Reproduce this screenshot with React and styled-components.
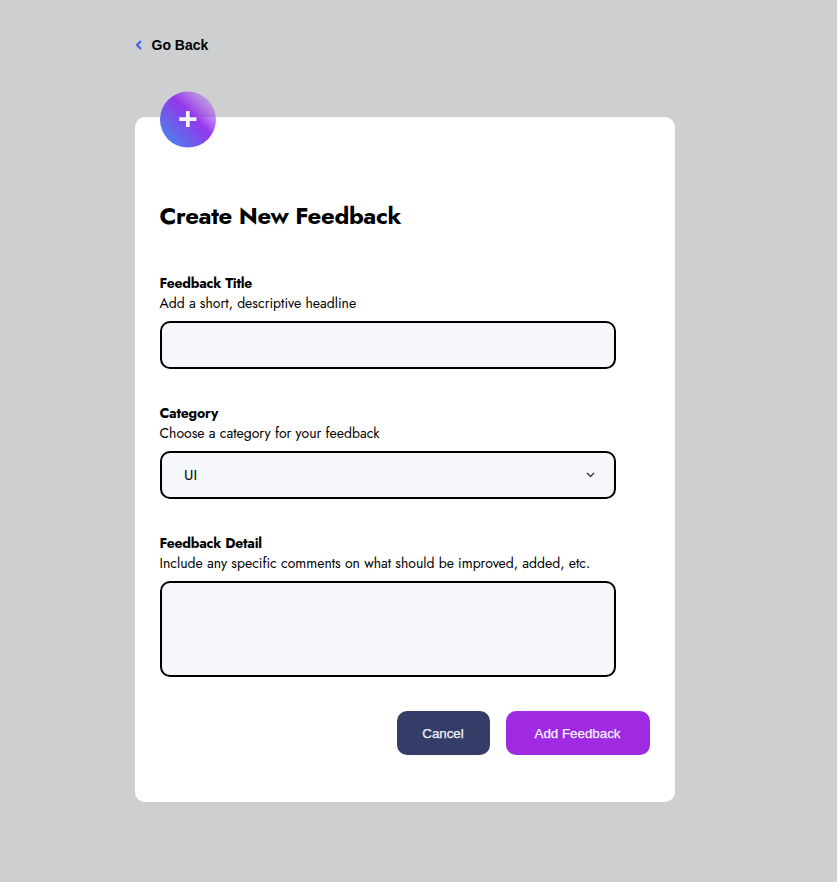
import React from "react";
import styled, { createGlobalStyle } from "styled-components";

const GlobalStyle = createGlobalStyle`
  *, *::before, *::after { box-sizing: border-box; }
  body { margin: 0; background: #cdcfd1; color: #000; font-family: Jost, Lato, sans-serif; }
`;

const Page = styled.main`
  width: 540px;
  min-height: 882px;
  margin-left: 134.5px;
  padding-top: 35px;
`;

const BackLink = styled.button`
  display: flex;
  align-items: center;
  gap: 10px;
  height: 20px;
  padding: 0 0 0 1px;
  border: 0;
  background: none;
  color: #000;
  font: bold 14px/20px "Liberation Sans", Arial, sans-serif;
  white-space: nowrap;
`;

const Card = styled.form`
  position: relative;
  display: flex;
  flex-direction: column;
  height: 685px;
  margin-top: 62px;
  padding: 80px 25px 47px;
  border-radius: 10px;
  background: #fff;
`;

const Badge = styled.svg`
  position: absolute;
  left: 25.5px;
  top: -25px;
  overflow: visible;
`;

const Title = styled.h1`
  margin: 0 0 39px;
  font-size: 24px;
  font-weight: 700;
  line-height: 37px;
  letter-spacing: -0.333px;
  white-space: nowrap;
`;

const Field = styled.div`
  display: flex;
  flex-direction: column;
  margin-bottom: 34px;
`;

const Label = styled.label`
  font-size: 14px;
  font-weight: 700;
  line-height: 20px;
  letter-spacing: -0.194px;
  width: max-content;
`;

const Hint = styled.span`
  margin-bottom: 8px;
  font-size: 14px;
  line-height: 20px;
  width: max-content;
`;

const Control = styled.div`
  display: flex;
  align-items: center;
  justify-content: space-between;
  width: 456px;
  height: ${(p) => p.$height}px;
  padding: 0 19px 0 22.5px;
  border: 2px solid #000;
  border-radius: 10px;
  background: #f5f7fd;
  font-size: 15px;
  line-height: 20px;
`;

const Actions = styled.div`
  display: flex;
  justify-content: flex-end;
  gap: 16px;
`;

const Button = styled.button`
  width: ${(p) => p.$width}px;
  height: 44px;
  padding: 0;
  border: 0;
  border-radius: 10px;
  background: ${(p) => p.$color};
  color: #f2f4fe;
  font: 13.333px "Liberation Sans", Arial, sans-serif;
  -webkit-text-stroke: 0.25px currentColor;
`;

export default function App() {
  return (
    <>
      <GlobalStyle />
      <Page>
        <BackLink type="button">
          <svg width="6" height="10" viewBox="0 0 6 10" fill="none">
            <path d="M5 1L1 5l4 4" stroke="#4661e6" strokeWidth="2" />
          </svg>
          Go Back
        </BackLink>
        <Card>
          <Badge width="56" height="56" viewBox="0 0.4 56 56">
            <defs>
              <linearGradient id="badge" x1="0" y1="56" x2="56" y2="0" gradientUnits="userSpaceOnUse">
                <stop offset="0" stopColor="#3793e8" />
                <stop offset="0.57" stopColor="#9537ec" />
                <stop offset="1" stopColor="#a337f6" stopOpacity="0" />
              </linearGradient>
            </defs>
            <circle cx="28" cy="28" r="28" fill="url(#badge)" />
            <path d="M19.2 27.6h17.3M27.8 19.4v16" stroke="#f2f4fe" strokeWidth="3.7" />
          </Badge>
          <Title>Create New Feedback</Title>
          <Field>
            <Label>Feedback Title</Label>
            <Hint>Add a short, descriptive headline</Hint>
            <Control $height={48} />
          </Field>
          <Field>
            <Label>Category</Label>
            <Hint>Choose a category for your feedback</Hint>
            <Control $height={48}>
              UI
              <svg width="9" height="6" viewBox="0 0 9 6" fill="none">
                <path d="M1 1l3.5 3.5L8 1" stroke="#24282d" strokeWidth="1.2" />
              </svg>
            </Control>
          </Field>
          <Field>
            <Label>Feedback Detail</Label>
            <Hint>Include any specific comments on what should be improved, added, etc.</Hint>
            <Control $height={96} />
          </Field>
          <Actions>
            <Button type="button" $width={93} $color="#343d68">Cancel</Button>
            <Button type="button" $width={144} $color="#9f2ae2">Add Feedback</Button>
          </Actions>
        </Card>
      </Page>
    </>
  );
}
